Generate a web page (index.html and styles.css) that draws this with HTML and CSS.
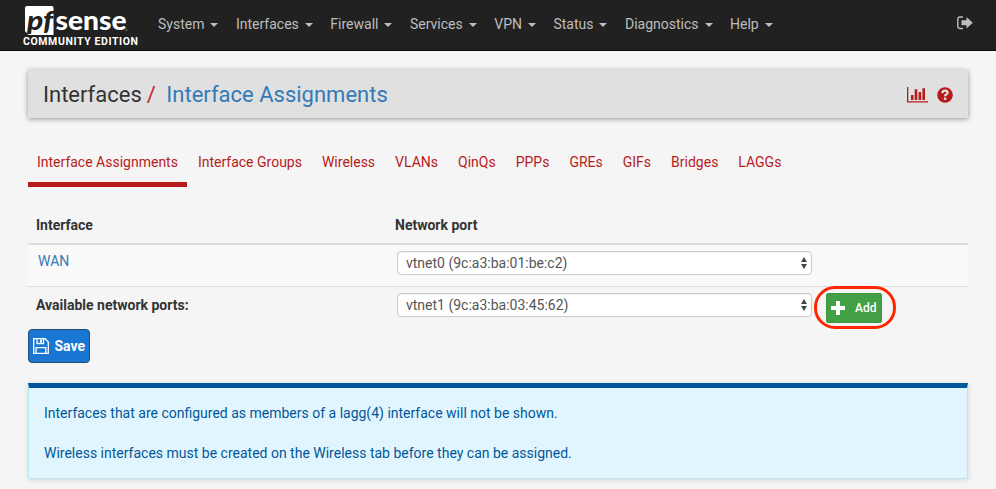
FILE: index.html
```html
<!DOCTYPE html>
<html lang="en">
<head>
<meta charset="utf-8">
<title>Interface Assignments</title>
<link rel="stylesheet" href="styles.css">
</head>
<body>
<header class="navbar">
  <a class="brand">
    <svg width="130" height="50" viewBox="0 0 130 50">
      <path d="M17 6H42Q43.500 6 43.500 8V35H18.500L15 31V8Q15 6 17 6Z" fill="#fff"/>
      <text class="logo-pf" x="17" y="29.500" textLength="26" lengthAdjust="spacingAndGlyphs">pf</text>
      <text class="logo-sense" x="45.500" y="29.500" textLength="71" lengthAdjust="spacingAndGlyphs">sense</text>
      <circle cx="116.500" cy="30" r=".8" fill="#999"/>
      <text class="logo-edition" x="13" y="45" textLength="115" lengthAdjust="spacing">COMMUNITY EDITION</text>
    </svg>
  </a>
  <nav class="menu">
    <a>System<i class="caret"></i></a>
    <a>Interfaces<i class="caret"></i></a>
    <a>Firewall<i class="caret"></i></a>
    <a>Services<i class="caret"></i></a>
    <a>VPN<i class="caret"></i></a>
    <a>Status<i class="caret"></i></a>
    <a>Diagnostics<i class="caret"></i></a>
    <a>Help<i class="caret"></i></a>
  </nav>
  <a class="logout"><svg width="16" height="14" viewBox="0 0 16 14"><path d="M6 1H3.200Q.8 1 .8 3.200V10.300Q.8 12.500 3.200 12.500H6" fill="none" stroke="#bdbdbd" stroke-width="1.400"/><path d="M4.500 4.200H9.500V1L15.800 6.700L9.500 12.400V9.200H4.500Z" fill="#bdbdbd"/></svg></a>
</header>
<main class="container">
  <div class="page-header">
    <h1>Interfaces<span class="slash">/</span><a>Interface Assignments</a></h1>
    <div class="page-icons">
      <svg width="21" height="16" viewBox="0 0 21 16" fill="#b71c1c"><path d="M0 0H1.300V14.200H21V15.500H0ZM4 8H6.500V13H4ZM7.700 2.300H10.300V13H7.700ZM11.600 5H14.200V13H11.600ZM15.400 1.200H18V13H15.400Z"/></svg>
      <svg width="16" height="16" viewBox="0 0 16 16"><circle cx="8" cy="8" r="7.800" fill="#b71c1c"/><path d="M5.300 6.100Q5.700 3.700 8 3.700Q10.600 3.700 10.600 5.700Q10.600 6.800 9.200 7.500Q8.100 8.100 8.100 9.200" fill="none" stroke="#e8dede" stroke-width="2.200"/><path d="M6.900 10.500H9.300V12.900H6.900Z" fill="#e8dede"/></svg>
    </div>
  </div>
  <nav class="tabs">
    <a class="active">Interface Assignments</a><a>Interface Groups</a><a>Wireless</a><a>VLANs</a><a>QinQs</a><a>PPPs</a><a>GREs</a><a>GIFs</a><a>Bridges</a><a>LAGGs</a>
  </nav>
  <div class="table">
    <div class="row head"><b>Interface</b><b>Network port</b></div>
    <div class="row wan">
      <a>WAN</a>
      <div class="select"><span>vtnet0 (9c:a3:ba:01:be:c2)</span><svg width="6" height="12" viewBox="0 0 6 12"><path d="M0 5L3 0L6 5ZM0 7H6L3 12Z" fill="#444"/></svg></div>
    </div>
    <div class="row available">
      <b>Available network ports:</b>
      <div class="select"><span>vtnet1 (9c:a3:ba:03:45:62)</span><svg width="6" height="12" viewBox="0 0 6 12"><path d="M0 5L3 0L6 5ZM0 7H6L3 12Z" fill="#444"/></svg></div>
      <div class="ring"><button class="add"><svg width="14" height="14" viewBox="0 0 14 14"><path d="M5 0H9V5H14V9H9V14H5V9H0V5H5Z" fill="#fff"/></svg><span>Add</span></button></div>
    </div>
  </div>
  <button class="save"><svg width="16" height="16" viewBox="0 0 16 16" fill="none" stroke="#fff" stroke-width="1.300"><path d="M.7 .7H12L15.300 4V15.300H.7ZM3 15V9.700H12.800V15M4 1V5.500H10.500V1"/><path d="M7 1.500H9V4.500H7Z" fill="#fff" stroke="none"/></svg><span>Save</span></button>
  <section class="info">
    <p>Interfaces that are configured as members of a lagg(4) interface will not be shown.</p>
    <p>Wireless interfaces must be created on the Wireless tab before they can be assigned.</p>
  </section>
</main>
</body>
</html>
```
FILE: styles.css
```css
* { box-sizing: border-box; }
body { margin: 0; height: 489px; overflow: hidden; background: #f5f5f5; color: #333; font: 14px/20px Roboto, sans-serif; }
button { font: inherit; }
.navbar { height: 51px; display: flex; align-items: flex-start; background: #212121; border-bottom: 1px solid #080808; padding-right: 23px; }
.brand { width: 148px; height: 50px; padding-left: 10px; flex: none; }
.brand svg { display: block; }
.logo-pf { font: italic 900 27px Lato, sans-serif; fill: #212121; }
.logo-sense { font: 900 27px Lato, sans-serif; fill: #fff; }
.logo-edition { font: 700 10.5px Roboto, sans-serif; fill: #fff; }
.menu { display: flex; padding: 14px 0 0 10px; gap: 17.5px; color: #bdbdbd; white-space: nowrap; }
.menu a { display: flex; align-items: center; }
.caret { margin: 2px 0 0 6px; border: 4px solid transparent; border-top-color: #bdbdbd; border-bottom: 0; }
.logout { margin: 16px 0 0 auto; height: 14px; }
.logout svg { display: block; }
.container { margin: 19px 28px 0; }
.page-header { height: 48px; padding: 2px 15px 0; display: flex; align-items: center; justify-content: space-between; background: #e0e0e0; box-shadow: 0 1px 5px rgba(0,0,0,.4); }
h1 { margin: 0; font-size: 22px; line-height: 26px; font-weight: 400; }
h1 a, .wan a { color: #337ab7; }
.slash { color: #c62828; margin: 0 10.5px 0 5px; }
.page-icons { display: flex; gap: 9px; }
.page-icons svg { display: block; }
.tabs { display: flex; gap: 2px; margin-top: 24px; color: #b71c1c; white-space: nowrap; }
.tabs a { height: 45px; padding: 10px 9px 0; }
.tabs .active { border-bottom: 5px solid #b71c1c; }
.table { margin-top: 18px; }
.row { display: grid; grid-template-columns: 369px 415px 1fr; }
.row b { font-weight: 700; padding-left: 8px; }
.head { height: 40px; padding-top: 10px; border-bottom: 2px solid #ddd; }
.head b + b { margin-left: -10px; }
.wan { height: 41px; padding-top: 6px; background: #f9f9f9; }
.wan > a { padding-left: 10px; }
.available { height: 43px; border-top: 1px solid #ddd; padding-top: 6px; }
.available b { padding-top: 2px; }
.select { height: 24px; background: #fff; border: 1px solid #ccc; border-radius: 4px; display: flex; align-items: center; justify-content: space-between; padding: 0 4px 0 8px; color: #555; box-shadow: inset 0 1px 1px rgba(0,0,0,.075); }
.ring { width: 82px; height: 43px; margin: -7px 0 0 2px; border: 3px solid #ff2600; border-radius: 21px; display: flex; justify-content: center; align-items: center; padding-right: 3px; }
.add { width: 56px; height: 30px; padding: 0 4px; display: flex; align-items: center; justify-content: space-between; color: #fff; background: #43a047; border: 1px solid #399a3d; border-radius: 2px; font-size: 12px; font-weight: 500; }
.save { width: 62px; height: 34px; margin-top: 0; display: flex; align-items: center; justify-content: space-between; padding: 0 4px; background: #1976d2; color: #fff; border: 1px solid #204d74; border-radius: 4px; font-weight: 700; }
.info { height: 96px; margin-top: 20px; padding: 15px; color: #01579b; background: #e1f5fe; border: 1px solid #b2ebf2; border-top: 5px solid #01579b; box-shadow: 0 1px 5px rgba(0,0,0,.13); }
.info p { margin: 0 0 20px; }
```
